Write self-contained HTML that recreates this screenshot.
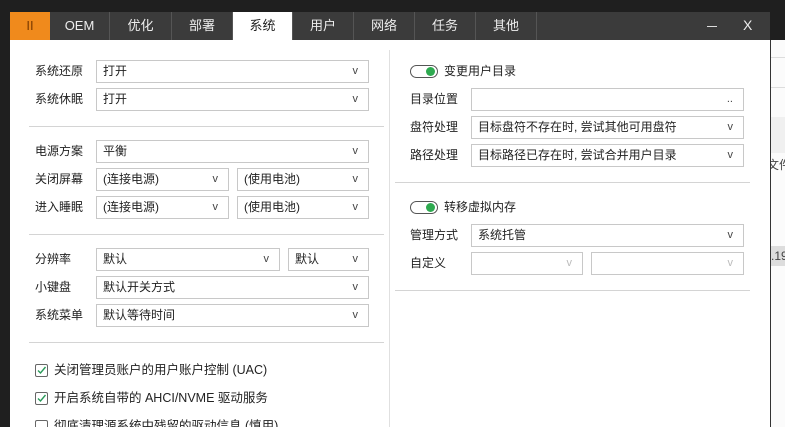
<!DOCTYPE html>
<html><head><meta charset="utf-8"><style>
*{box-sizing:border-box;margin:0;padding:0}
html,body{width:785px;height:427px;overflow:hidden}
body{background:#1f1f1f;font-family:"Liberation Sans","Noto Sans CJK SC",sans-serif;font-size:12px;color:#222;position:relative}
.abs{position:absolute}
.side{left:770px;top:40px;width:15px;height:387px;background:#fbfbfb;border-left:1px solid #333;overflow:hidden}
.tabs{left:10px;top:12px;width:760px;height:28px;background:#3b3b3b}
.tab{position:absolute;top:0;height:28px;line-height:28px;text-align:center;color:#eee;font-size:13px;border-right:1px solid #555}
.main{left:10px;top:40px;width:760px;height:387px;background:#fff}
.lbl{position:absolute;font-size:12px;color:#222;line-height:23px;white-space:nowrap}
.box{position:absolute;height:23px;border:1px solid #c8c8c8;background:#fff;line-height:21px;padding-left:6px;font-size:12px;white-space:nowrap}
.box .v{position:absolute;right:10px;top:0;font-size:11px;color:#444}
.hr{position:absolute;height:1px;background:#d4d4d4}
.tog{position:absolute;width:28px;height:13px;border:1px solid #555;border-radius:7px}
.tog::after{content:"";position:absolute;right:2px;top:1px;width:9px;height:9px;border-radius:50%;background:#2eaa50}
.cb{position:absolute;width:13px;height:13px;border:1px solid #666;border-radius:2px}
</style></head><body>
<div class="abs side"><div class="abs" style="left:0;top:17px;width:15px;height:1px;background:#ddd"></div><div class="abs" style="left:0;top:47px;width:15px;height:1px;background:#ddd"></div><div class="abs" style="left:0;top:77px;width:15px;height:36px;background:#f0f0f0"></div><div class="abs" style="left:-4px;top:116px;font-size:12px;color:#444;white-space:nowrap">文件</div><div class="abs" style="left:0;top:206px;width:15px;height:20px;background:#ddd;color:#444;font-size:12px;line-height:20px;white-space:nowrap">.19</div></div>
<div class="abs tabs">
<div class="tab" style="left:0;width:40px;background:#f08a1c;color:#7a3a00;border:none">II</div>
<div class="tab" style="left:40px;width:60px">OEM</div>
<div class="tab" style="left:100px;width:62px">优化</div>
<div class="tab" style="left:162px;width:61px">部署</div>
<div class="tab" style="left:223px;width:60px;background:#fff;color:#222">系统</div>
<div class="tab" style="left:283px;width:61px">用户</div>
<div class="tab" style="left:344px;width:61px">网络</div>
<div class="tab" style="left:405px;width:61px">任务</div>
<div class="tab" style="left:466px;width:61px">其他</div>
<div class="abs" style="left:697px;top:14px;width:10px;height:1px;background:#ddd"></div>
<div class="abs" style="left:733px;top:5px;color:#eee;font-size:14px">X</div>
</div>
<div class="abs main"></div>
<div class="abs" style="left:389px;top:50px;width:1px;height:377px;background:#e0e0e0"></div>

<div class="lbl" style="left:35px;top:60px">系统还原</div><div class="box" style="left:96px;top:60px;width:273px">打开<span class="v">v</span></div>
<div class="lbl" style="left:35px;top:88px">系统休眠</div><div class="box" style="left:96px;top:88px;width:273px">打开<span class="v">v</span></div>
<div class="hr" style="left:29px;top:126px;width:355px"></div>
<div class="lbl" style="left:35px;top:140px">电源方案</div><div class="box" style="left:96px;top:140px;width:273px">平衡<span class="v">v</span></div>
<div class="lbl" style="left:35px;top:168px">关闭屏幕</div><div class="box" style="left:96px;top:168px;width:133px">(连接电源)<span class="v">v</span></div><div class="box" style="left:237px;top:168px;width:132px">(使用电池)<span class="v">v</span></div>
<div class="lbl" style="left:35px;top:196px">进入睡眠</div><div class="box" style="left:96px;top:196px;width:133px">(连接电源)<span class="v">v</span></div><div class="box" style="left:237px;top:196px;width:132px">(使用电池)<span class="v">v</span></div>
<div class="hr" style="left:29px;top:234px;width:355px"></div>
<div class="lbl" style="left:35px;top:248px">分辨率</div><div class="box" style="left:96px;top:248px;width:184px">默认<span class="v">v</span></div><div class="box" style="left:288px;top:248px;width:81px">默认<span class="v">v</span></div>
<div class="lbl" style="left:35px;top:276px">小键盘</div><div class="box" style="left:96px;top:276px;width:273px">默认开关方式<span class="v">v</span></div>
<div class="lbl" style="left:35px;top:304px">系统菜单</div><div class="box" style="left:96px;top:304px;width:273px">默认等待时间<span class="v">v</span></div>
<div class="hr" style="left:29px;top:342px;width:355px"></div>
<div class="cb" style="left:35px;top:364px"><svg width="11" height="11" style="position:absolute;left:0;top:0"><path d="M2 5.5L4.5 8L9.5 2" stroke="#2a9a5a" stroke-width="1.4" fill="none"/></svg></div><div class="lbl" style="left:54px;top:359px;font-size:12.5px">关闭管理员账户的用户账户控制 (UAC)</div>
<div class="cb" style="left:35px;top:392px"><svg width="11" height="11" style="position:absolute;left:0;top:0"><path d="M2 5.5L4.5 8L9.5 2" stroke="#2a9a5a" stroke-width="1.4" fill="none"/></svg></div><div class="lbl" style="left:54px;top:387px;font-size:12.5px">开启系统自带的 AHCI/NVME 驱动服务</div>
<div class="cb" style="left:35px;top:420px"></div><div class="lbl" style="left:54px;top:415px;font-size:12.5px">彻底清理源系统中残留的驱动信息 (慎用)</div>

<div class="tog" style="left:410px;top:65px"></div><div class="lbl" style="left:444px;top:60px">变更用户目录</div>
<div class="lbl" style="left:410px;top:88px">目录位置</div><div class="box" style="left:471px;top:88px;width:273px"><span class="v">..</span></div>
<div class="lbl" style="left:410px;top:116px">盘符处理</div><div class="box" style="left:471px;top:116px;width:273px">目标盘符不存在时, 尝试其他可用盘符<span class="v">v</span></div>
<div class="lbl" style="left:410px;top:144px">路径处理</div><div class="box" style="left:471px;top:144px;width:273px">目标路径已存在时, 尝试合并用户目录<span class="v">v</span></div>
<div class="hr" style="left:395px;top:182px;width:355px"></div>
<div class="tog" style="left:410px;top:201px"></div><div class="lbl" style="left:444px;top:196px">转移虚拟内存</div>
<div class="lbl" style="left:410px;top:224px">管理方式</div><div class="box" style="left:471px;top:224px;width:273px">系统托管<span class="v">v</span></div>
<div class="lbl" style="left:410px;top:252px">自定义</div><div class="box" style="left:471px;top:252px;width:112px"><span class="v" style="color:#bbb">v</span></div><div class="box" style="left:591px;top:252px;width:153px"><span class="v" style="color:#bbb">v</span></div>
<div class="hr" style="left:395px;top:290px;width:355px"></div>
</body></html>
